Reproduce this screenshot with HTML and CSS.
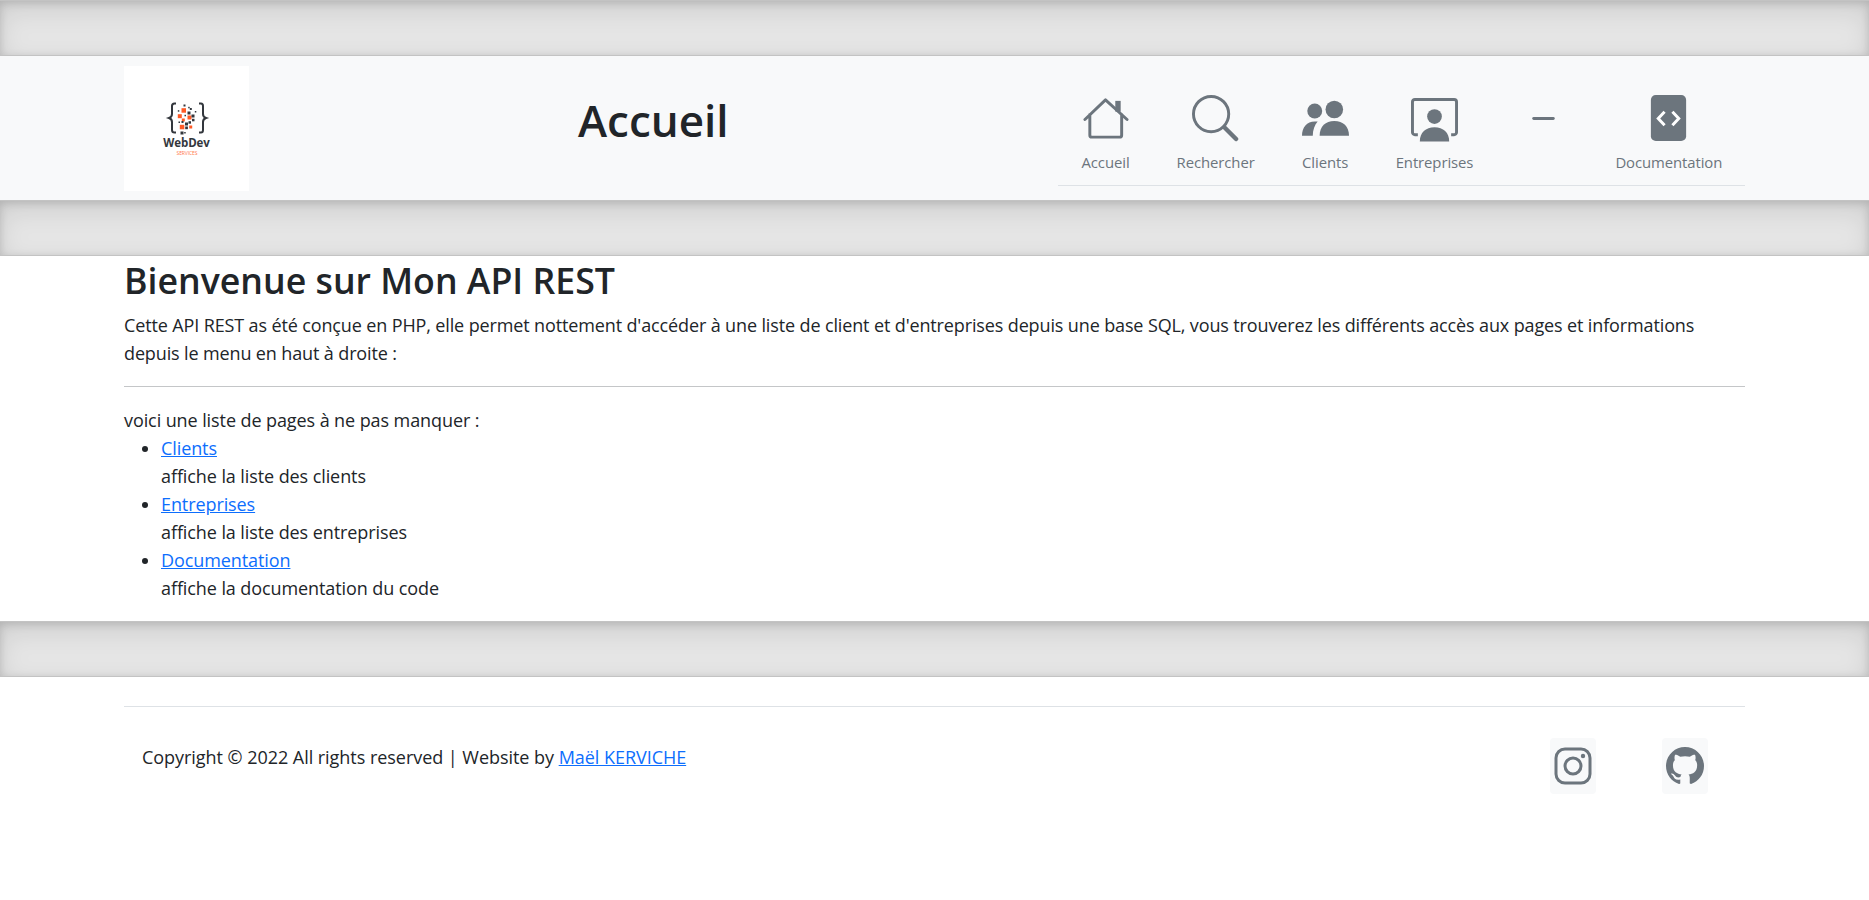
FILE: index.html
```html
<!DOCTYPE html>
<html lang="fr">
<head>
  <meta charset="UTF-8" />
  <title>Accueil</title>
  <link rel="stylesheet" href="styles.css">
</head>
<body>
  <div class="divider"></div>

  <!-- Entete -->
  <header class="header">
    <div class="container header-row">
      <a class="logo" href="#">
        <svg width="60" height="60" viewBox="0 0 60 60">
          <path d="M19 4.500 H17.500 Q15 4.500 15 7 V15 Q15 18 12 19 Q15 20 15 23 V31 Q15 33.500 17.500 33.500 H19" fill="none" stroke="#33373d" stroke-width="2"/>
          <path d="M42 4.500 H44 Q46 4.500 46 7 V15 Q46 18 49 19 Q46 20 46 23 V31 Q46 33.500 44 33.500 H42" fill="none" stroke="#33373d" stroke-width="2"/>
          <g fill="#ff5a26">
            <rect x="24.500" y="9.200" width="4.500" height="4.500"/>
            <rect x="20.800" y="15.200" width="4" height="4"/>
            <rect x="30.500" y="16.500" width="4" height="4"/>
            <rect x="24.800" y="19.500" width="3" height="3"/>
            <rect x="22.800" y="25.800" width="4.500" height="4.500"/>
            <rect x="32.200" y="26.500" width="3" height="3"/>
          </g>
          <g fill="#33373d">
            <rect x="26.500" y="5.500" width="2" height="2"/>
            <rect x="20.800" y="11.200" width="1.500" height="1.500"/>
            <rect x="31.200" y="7.800" width="1.500" height="1.500"/>
            <rect x="32.800" y="9" width="2" height="2"/>
            <rect x="37.800" y="12" width="1.500" height="1.500"/>
            <rect x="30.500" y="12.500" width="3" height="3"/>
            <rect x="34.500" y="15.500" width="3" height="3"/>
            <rect x="27.500" y="15.800" width="1.500" height="1.500"/>
            <rect x="35" y="19.800" width="2.500" height="2.500"/>
            <rect x="31.500" y="22.200" width="2.500" height="2.500"/>
            <rect x="28" y="23.500" width="3" height="3"/>
            <rect x="21.500" y="22.500" width="1.500" height="1.500"/>
            <rect x="24.500" y="22" width="2" height="2"/>
            <rect x="28.200" y="27.500" width="2.700" height="2.700"/>
            <rect x="23.500" y="32.500" width="3" height="3"/>
            <rect x="27.200" y="33" width="1.500" height="1.500"/>
          </g>
          <text class="logo-name" x="29.500" y="47.500" text-anchor="middle">WebDev</text>
          <text class="logo-sub" x="30" y="55.500" text-anchor="middle">SERVICES</text>
        </svg>
      </a>
      <h1 class="page-title">Accueil</h1>
      <nav>
        <ul class="nav-list">
          <li>
            <a class="nav-link link-accueil" href="#">
              <svg class="icon" viewBox="0 0 48 48"><path d="M3 25 24 5l22 20M8 20v21a2 2 0 0 0 2 2h28.500a2 2 0 0 0 2-2V20" fill="none" stroke="#6c757d" stroke-width="3" stroke-linecap="round" stroke-linejoin="round"/><rect x="34" y="6" width="5.500" height="11" fill="#6c757d"/></svg>
              Accueil
            </a>
          </li>
          <li>
            <a class="nav-link link-search" href="#">
              <svg class="icon" viewBox="0 0 48 48"><circle cx="19.500" cy="19.500" r="18" fill="none" stroke="#6c757d" stroke-width="3"/><path d="M33 33 45 45" stroke="#6c757d" stroke-width="4.500" stroke-linecap="round"/></svg>
              Rechercher
            </a>
          </li>
          <li>
            <a class="nav-link link-clients" href="#">
              <svg class="icon" viewBox="0 0 48 48" fill="#6c757d"><circle cx="33" cy="14.800" r="9"/><circle cx="13" cy="16.400" r="7.600"/><path d="M18 41.500c0-9.500 6-15 15-15s15 5.500 15 15z"/><path d="M0 41.500c0-8.500 5-14.500 13-14.500h3c-3 3.500-5 8.500-5 14.500z"/></svg>
              Clients
            </a>
          </li>
          <li>
            <a class="nav-link link-entreprises" href="#">
              <svg class="icon" viewBox="0 0 48 48" fill="#6c757d"><path d="M7 40.500 H4 a2.500 2.500 0 0 1-2.500-2.500 V7 A2.500 2.500 0 0 1 4 4.500 h40 a2.500 2.500 0 0 1 2.500 2.500 v31 a2.500 2.500 0 0 1-2.500 2.500 h-3" fill="none" stroke="#6c757d" stroke-width="3"/><circle cx="24" cy="22" r="7.500"/><path d="M9 47.500c0-9 6-14.500 15-14.500s15 5.500 15 14.500z"/></svg>
              Entreprises
            </a>
          </li>
          <li>
            <a class="nav-link link-empty" href="#">
              <svg class="icon" viewBox="0 0 48 48"><path d="M14 24h20" stroke="#6c757d" stroke-width="3" stroke-linecap="round"/></svg>
              &nbsp;
            </a>
          </li>
          <li>
            <a class="nav-link link-doc" href="#">
              <svg class="icon" viewBox="0 0 48 48"><rect x="6" y="0" width="36" height="47" rx="5" fill="#6c757d"/><path d="M20 17l-6.500 7 6.500 7M28 17l6.500 7-6.500 7" fill="none" stroke="#fff" stroke-width="3"/></svg>
              Documentation
            </a>
          </li>
        </ul>
      </nav>
    </div>
  </header>

  <div class="divider"></div>

  <!-- Contenu -->
  <main class="container content">
    <h2>Bienvenue sur Mon API REST</h2>
    <p class="intro">Cette API REST as été conçue en PHP, elle permet nottement d'accéder à une liste de client et d'entreprises depuis une base SQL, vous trouverez les différents accès aux pages et informations depuis le menu en haut à droite :</p>
    <hr />
    <p class="list-title">voici une liste de pages à ne pas manquer :</p>
    <ul class="page-list">
      <li><a href="#">Clients</a><br />affiche la liste des clients</li>
      <li><a href="#">Entreprises</a><br />affiche la liste des entreprises</li>
      <li><a href="#">Documentation</a><br />affiche la documentation du code</li>
    </ul>
  </main>

  <div class="divider"></div>

  <!-- Pied de page -->
  <footer class="container footer">
    <div class="footer-row">
      <p class="copyright">Copyright © 2022 All rights reserved | Website by <a href="#">Maël KERVICHE</a></p>
      <div class="socials">
        <a class="social" href="#">
          <svg viewBox="0 0 38 38" width="38" height="38"><rect x="2" y="2" width="34" height="34" rx="9" fill="none" stroke="#6c757d" stroke-width="3"/><circle cx="19" cy="19" r="8" fill="none" stroke="#6c757d" stroke-width="3"/><circle cx="29" cy="9" r="2.200" fill="#6c757d"/></svg>
        </a>
        <a class="social" href="#">
          <svg viewBox="0 0 16 16" width="38" height="38"><path fill="#6c757d" d="M8 0C3.580 0 0 3.580 0 8c0 3.540 2.290 6.530 5.470 7.590.4.070.55-.17.55-.38 0-.19-.01-.82-.01-1.490-2.010.37-2.530-.49-2.690-.94-.09-.23-.48-.94-.82-1.130-.28-.15-.68-.52-.01-.53.630-.01 1.080.58 1.230.82.720 1.210 1.870.87 2.330.66.070-.52.280-.87.510-1.070-1.780-.2-3.640-.89-3.640-3.950 0-.87.310-1.590.82-2.150-.08-.2-.36-1.020.08-2.120 0 0 .67-.21 2.200.82.640-.18 1.320-.27 2-.27.680 0 1.360.09 2 .27 1.530-1.040 2.200-.82 2.200-.82.440 1.100.160 1.920.080 2.120.510.560.820 1.270.820 2.150 0 3.070-1.870 3.750-3.650 3.950.290.250.540.730.540 1.480 0 1.070-.010 1.930-.010 2.200 0 .210.150.460.550.380A8.010 8.010 0 0 0 16 8c0-4.420-3.580-8-8-8z"/></svg>
        </a>
      </div>
    </div>
  </footer>
</body>
</html>
```

FILE: styles.css
```css
* {
  box-sizing: border-box;
}

body {
  margin: 0;
  font-family: "Open Sans", sans-serif;
  font-size: 18px;
  line-height: 28px;
  letter-spacing: -.09px;
  color: #212529;
  background-color: #fff;
}

a {
  color: #0d6efd;
}

.container {
  width: 1621px;
  margin-left: 124px;
}

.divider {
  height: 56px;
  background-color: rgba(0, 0, 0, .1);
  border: solid rgba(0, 0, 0, .15);
  border-width: 1px 0;
  box-shadow: inset 0 .5em 1.5em rgba(0, 0, 0, .1), inset 0 .125em .5em rgba(0, 0, 0, .15);
}

.header {
  height: 144px;
  background-color: #f8f9fa;
  padding-top: 10px;
}

.header-row {
  display: flex;
}

.logo {
  display: flex;
  align-items: center;
  justify-content: center;
  width: 125px;
  height: 125px;
  background-color: #fff;
}

.logo-name {
  font-family: "Open Sans", sans-serif;
  font-size: 11.5px;
  font-weight: 700;
  fill: #33373d;
}

.logo-sub {
  font-family: "Open Sans", sans-serif;
  font-size: 5px;
  fill: #ff7a4d;
}

.page-title {
  margin: 26px 0 0 329px;
  font-size: 44px;
  line-height: 56px;
  font-weight: 600;
  letter-spacing: 0;
}

nav {
  margin-left: auto;
}

.nav-list {
  display: flex;
  width: 687px;
  height: 120px;
  margin: 0;
  padding: 0;
  list-style: none;
  border-bottom: 1px solid #dee2e6;
}

.nav-link {
  display: flex;
  flex-direction: column;
  align-items: center;
  padding: 29px 23.5px 0;
  font-size: 14.9px;
  line-height: 22px;
  color: #6c757d;
  text-decoration: none;
}

.icon {
  width: 47px;
  height: 47px;
  margin-bottom: 9px;
}

.link-empty {
  width: 93px;
}

.link-doc {
  width: 158px;
}

.content {
  height: 365px;
}

h2 {
  margin: 0;
  padding-top: 1px;
  padding-bottom: 1px;
  font-size: 35.7px;
  line-height: 46px;
  font-weight: 600;
  letter-spacing: 0;
}

.intro {
  margin: 7px 0 0;
  letter-spacing: -.13px;
}

hr {
  margin: 19px 0 19px;
  border: 0;
  border-top: 1px solid #c4c6c8;
}

.list-title {
  margin: 0;
}

.page-list {
  margin: 0;
  padding-left: 37px;
}

.footer {
  padding-top: 29px;
}

.footer-row {
  display: flex;
  justify-content: space-between;
  border-top: 1px solid #dee2e6;
  padding: 31px 37px 0 18px;
}

.copyright {
  margin: 5px 0 0;
  letter-spacing: -.04px;
}

.socials {
  display: flex;
  gap: 66px;
}

.social {
  display: flex;
  align-items: center;
  justify-content: center;
  width: 46px;
  height: 56px;
  border-radius: 4px;
  background-color: #f8f9fa;
}
```
